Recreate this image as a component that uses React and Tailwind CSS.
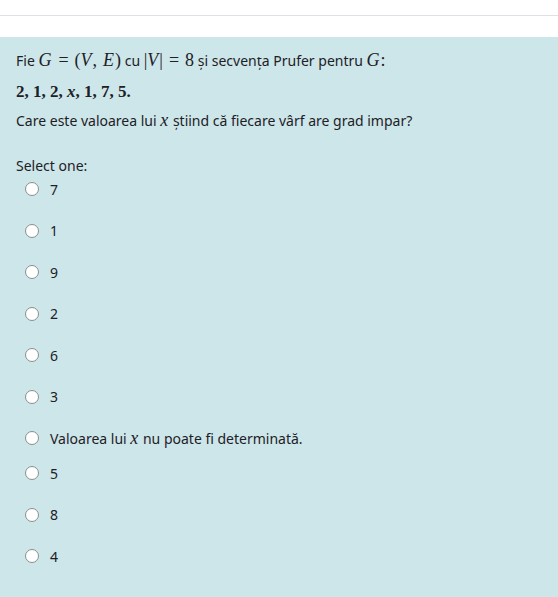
const options = ["7", "1", "9", "2", "6", "3", "x", "5", "8", "4"];

function M({ children }) {
  return <span className="font-['Liberation_Serif',serif] text-[18px]">{children}</span>;
}
function I({ children }) {
  return <span className="font-['Liberation_Serif',serif] italic text-[18px] pr-[1px]">{children}</span>;
}
function Eq() {
  return <span className="font-['Liberation_Serif',serif] text-[18px] mx-[6px]">=</span>;
}

function Radio() {
  return <span className="w-[14px] h-[14px] rounded-full bg-white border-[1.5px] border-[#8d8d8d] shrink-0" />;
}

export default function App() {
  return (
    <div className="w-[558px] h-[597px] bg-white font-['Noto_Sans',sans-serif] text-[14px] text-[#1d2125] overflow-hidden">
      <div className="h-[15px]" />
      <div className="h-px bg-[#dee2e6]" />
      <div className="h-[21px]" />
      <div className="bg-[#cde6ea] h-[560px] px-4 pt-[11px]">
        <p className="h-[24px] flex items-center">
          Fie&nbsp;<I>G</I><Eq /><M>(</M><I>V</I><M>,</M><span className="w-[6px]" /><I>E</I><M>)</M>&nbsp;cu&nbsp;<M>|</M><I>V</I><M>|</M><Eq /><M>8</M>&nbsp;și secvența Prufer pentru&nbsp;<I>G</I><M>:</M>
        </p>
        <p className="h-[24px] mt-[8px] flex items-center font-['Liberation_Serif',serif] font-bold text-[17px]">
          2,&nbsp;1,&nbsp;2,&nbsp;<span className="italic">x</span>,&nbsp;1,&nbsp;7,&nbsp;5.
        </p>
        <p className="h-[24px] mt-[4px] flex items-center">
          Care este valoarea lui&nbsp;<I>x</I>&nbsp;știind că fiecare vârf are grad impar?
        </p>
        <p className="h-[24px] mt-[21px] flex items-center">Select one:</p>
        <div className="flex flex-col">
          {options.map((o, i) => (
            <div
              key={i}
              className={`flex pl-[9px] ${i === 0 ? "h-[24px] items-center" : i === 7 ? "h-[35px] items-end" : "h-[41.5px] items-end"}`}
            >
              <div className="flex items-center gap-[11px] h-[24px]">
                <Radio />
                {o === "x" ? (
                  <span>
                    Valoarea lui <I>x</I> nu poate fi determinată.
                  </span>
                ) : (
                  <span>{o}</span>
                )}
              </div>
            </div>
          ))}
        </div>
      </div>
    </div>
  );
}
